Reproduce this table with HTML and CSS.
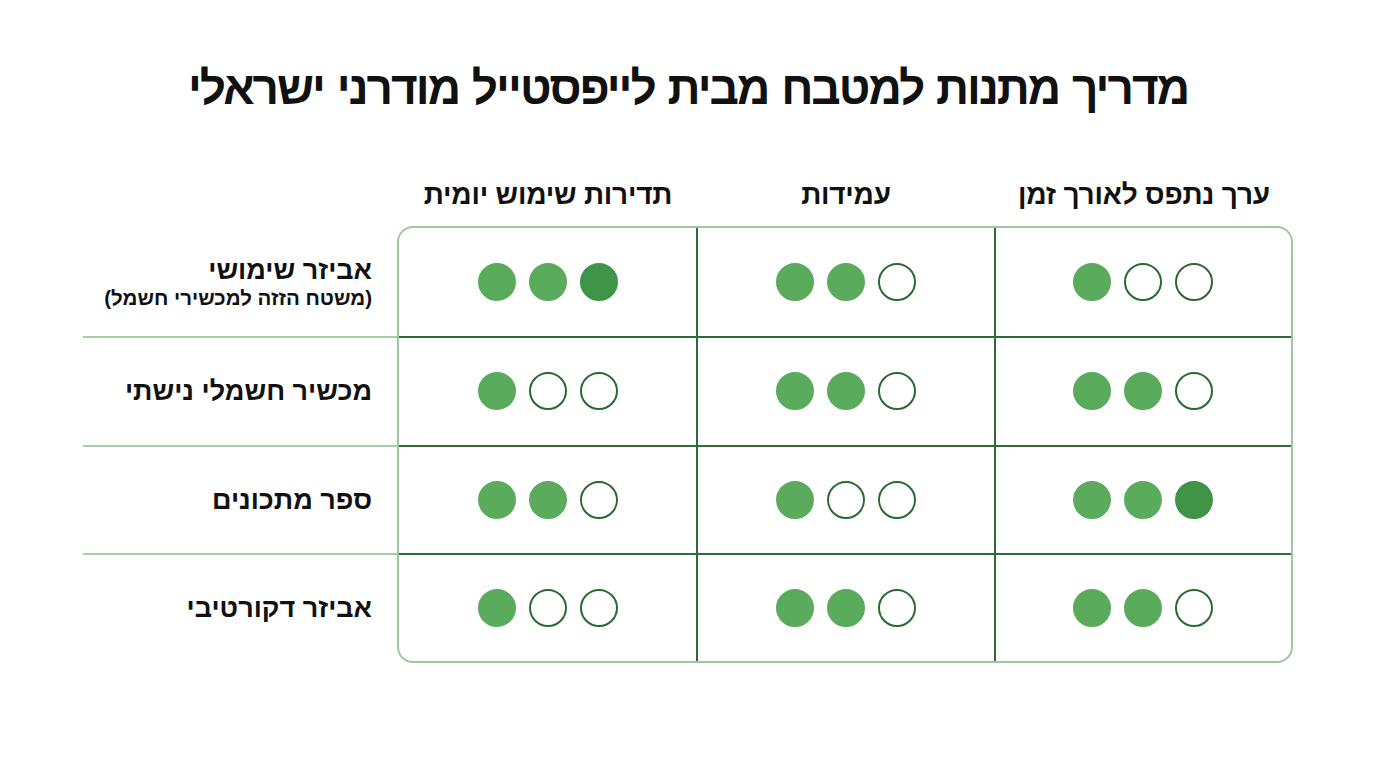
FILE: index.html
```html
<!DOCTYPE html>
<html lang="he" dir="rtl">
<head>
<meta charset="utf-8">
<link rel="stylesheet" href="styles.css">
</head>
<body>
<main class="page">
  <h1 class="title">מדריך מתנות למטבח מבית לייפסטייל מודרני ישראלי</h1>
  <div class="board">
    <div class="heads">
      <div class="head">ערך נתפס לאורך זמן</div>
      <div class="head">עמידות</div>
      <div class="head">תדירות שימוש יומית</div>
      <div class="head-spacer"></div>
    </div>
    <div class="body">
      <div class="grid">
        <div class="cell"><span class="dot f"></span><span class="dot"></span><span class="dot"></span></div>
        <div class="cell"><span class="dot f"></span><span class="dot f"></span><span class="dot"></span></div>
        <div class="cell"><span class="dot f"></span><span class="dot f"></span><span class="dot d"></span></div>

        <div class="cell"><span class="dot f"></span><span class="dot f"></span><span class="dot"></span></div>
        <div class="cell"><span class="dot f"></span><span class="dot f"></span><span class="dot"></span></div>
        <div class="cell"><span class="dot f"></span><span class="dot"></span><span class="dot"></span></div>

        <div class="cell"><span class="dot f"></span><span class="dot f"></span><span class="dot d"></span></div>
        <div class="cell"><span class="dot f"></span><span class="dot"></span><span class="dot"></span></div>
        <div class="cell"><span class="dot f"></span><span class="dot f"></span><span class="dot"></span></div>

        <div class="cell"><span class="dot f"></span><span class="dot f"></span><span class="dot"></span></div>
        <div class="cell"><span class="dot f"></span><span class="dot f"></span><span class="dot"></span></div>
        <div class="cell"><span class="dot f"></span><span class="dot"></span><span class="dot"></span></div>
      </div>
      <div class="labels">
        <div class="label"><span class="label-main">אביזר שימושי</span><span class="label-sub">(משטח הזזה למכשירי חשמל)</span></div>
        <div class="label"><span class="label-main">מכשיר חשמלי נישתי</span></div>
        <div class="label"><span class="label-main">ספר מתכונים</span></div>
        <div class="label"><span class="label-main">אביזר דקורטיבי</span></div>
      </div>
    </div>
  </div>
</main>
</body>
</html>
```
FILE: styles.css
```css
* { box-sizing: border-box; }
html, body { margin: 0; padding: 0; background: #ffffff; }
body {
  font-family: "Liberation Sans", "DejaVu Sans", sans-serif;
  color: #111111;
  width: 1376px;
  height: 768px;
  overflow: hidden;
}
.page {
  display: flex;
  flex-direction: column;
  align-items: center;
  padding-top: 62px;
}
.title {
  margin: 0;
  font-size: 46px;
  line-height: 52px;
  font-weight: 700;
  letter-spacing: -2px;
  word-spacing: 2px;
  text-align: center;
}
.board {
  width: 1210px;
  margin-top: 59px;
  display: flex;
  flex-direction: column;
}
.heads {
  display: flex;
  height: 50px;
  align-items: center;
  padding-bottom: 6px;
}
.head {
  width: 298px;
  text-align: center;
  font-size: 28px;
  font-weight: 700;
  letter-spacing: -0.2px;
}
.head-spacer { flex: 1; }
.body {
  display: flex;
  margin-top: 3px;
}
.grid {
  width: 896px;
  height: 437px;
  border: 2px solid #9dc89d;
  border-radius: 16px;
  display: grid;
  grid-template-columns: repeat(3, 1fr);
  grid-template-rows: repeat(4, 1fr);
}
.cell {
  display: flex;
  direction: ltr;
  justify-content: center;
  align-items: center;
  gap: 13px;
  border-left: 2px solid #2e6b36;
  border-top: 2px solid #2e6b36;
}
.cell:nth-child(3n) { border-left: none; }
.cell:nth-child(-n+3) { border-top: none; }
.dot {
  width: 38px;
  height: 38px;
  border-radius: 50%;
  border: 2.5px solid #2a6a31;
  background: #ffffff;
}
.dot.f { background: #5aab5c; border-color: #5aab5c; }
.dot.d { background: #3f9447; border-color: #3f9447; }
.labels {
  flex: 1;
  height: 437px;
  padding-top: 2px;
  padding-bottom: 2px;
  display: grid;
  grid-template-rows: repeat(4, 1fr);
}
.label {
  display: flex;
  flex-direction: column;
  justify-content: center;
  align-items: flex-start;
  padding-right: 25px;
  border-top: 2px solid #a8cfa8;
}
.label:first-child { border-top: none; }
.label-main {
  font-size: 27px;
  font-weight: 700;
  line-height: 32px;
}
.label-sub {
  font-size: 20.5px;
  font-weight: 700;
  line-height: 24px;
}
```
